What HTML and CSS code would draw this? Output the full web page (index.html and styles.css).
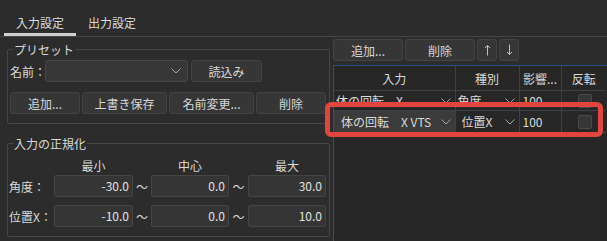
FILE: index.html
```html
<!DOCTYPE html>
<html lang="ja">
<head>
  <meta charset="UTF-8">
  <title>入力設定</title>
  <link rel="stylesheet" href="styles.css">
</head>
<body>
<div class="tabs">
  <div class="tab active">入力設定</div>
  <div class="tab">出力設定</div>
</div>

<div class="main">
  <div class="left">
    <fieldset class="group preset">
      <legend>プリセット</legend>
      <div class="name-row">
        <span class="label">名前：</span>
        <div class="combo name-combo">
          <span></span>
          <svg class="chevron" width="10" height="6" viewBox="0 0 10 6"><polyline points="0.5,0.5 5,5 9.5,0.5"/></svg>
        </div>
        <button class="btn load">読込み</button>
      </div>
      <div class="preset-buttons">
        <button class="btn">追加...</button>
        <button class="btn">上書き保存</button>
        <button class="btn">名前変更...</button>
        <button class="btn">削除</button>
      </div>
    </fieldset>

    <fieldset class="group normalize">
      <legend>入力の正規化</legend>
      <div class="norm-row head">
        <span></span><span>最小</span><span></span><span>中心</span><span></span><span>最大</span>
      </div>
      <div class="norm-row">
        <span class="label">角度：</span>
        <div class="num">-30.0</div>
        <span class="tilde">〜</span>
        <div class="num">0.0</div>
        <span class="tilde">〜</span>
        <div class="num">30.0</div>
      </div>
      <div class="norm-row second">
        <span class="label">位置X：</span>
        <div class="num">-10.0</div>
        <span class="tilde">〜</span>
        <div class="num">0.0</div>
        <span class="tilde">〜</span>
        <div class="num">10.0</div>
      </div>
    </fieldset>
  </div>

  <div class="right">
    <div class="toolbar">
      <button class="btn wide">追加...</button>
      <button class="btn wide">削除</button>
      <button class="btn arrow">
        <svg width="7" height="12" viewBox="0 0 7 12"><path d="M3.5 1.5v10M1 4l2.5-2.5L6 4"/></svg>
      </button>
      <button class="btn arrow">
        <svg width="7" height="12" viewBox="0 0 7 12"><path d="M3.5 0.5v10M1 8l2.5 2.5L6 8"/></svg>
      </button>
    </div>

    <div class="table-wrap">
      <table class="bindings">
        <colgroup>
          <col class="c-input"><col class="c-kind"><col class="c-weight"><col class="c-invert">
        </colgroup>
        <thead>
          <tr><th>入力</th><th>種別</th><th>影響...</th><th>反転</th></tr>
        </thead>
        <tbody>
          <tr class="r1">
            <td><div class="cell-combo"><span>体の回転　X</span><svg class="chevron" width="10" height="6" viewBox="0 0 10 6"><polyline points="0.5,0.5 5,5 9.5,0.5"/></svg></div></td>
            <td><div class="cell-combo"><span>角度</span><svg class="chevron" width="10" height="6" viewBox="0 0 10 6"><polyline points="0.5,0.5 5,5 9.5,0.5"/></svg></div></td>
            <td class="weight">100</td>
            <td><div class="check"></div></td>
          </tr>
          <tr class="r2">
            <td><div class="cell-combo active"><span>体の回転　X VTS</span><svg class="chevron" width="10" height="6" viewBox="0 0 10 6"><polyline points="0.5,0.5 5,5 9.5,0.5"/></svg></div></td>
            <td><div class="cell-combo"><span>位置X</span><svg class="chevron" width="10" height="6" viewBox="0 0 10 6"><polyline points="0.5,0.5 5,5 9.5,0.5"/></svg></div></td>
            <td class="weight">100</td>
            <td><div class="check"></div></td>
          </tr>
        </tbody>
      </table>
      <div class="highlight"></div>
    </div>
  </div>
</div>
</body>
</html>
```

FILE: styles.css
```css
body {
  margin: 0;
  width: 607px;
  height: 241px;
  overflow: hidden;
  background-color: #2c2c2c;
  color: #dadada;
  font-family: "Noto Sans CJK JP", "Noto Sans", sans-serif;
  font-size: 12px;
  line-height: 17px;
}
.tabs {
  display: flex;
  height: 36px;
  padding-left: 4px;
  border-bottom: 1px solid #454545;
}
.tab {
  width: 72px;
  margin-top: 12px;
  height: 21px;
  line-height: 21px;
  text-align: center;
  border-bottom: 3px solid transparent;
}
.tab.active {
  border-bottom-color: #cfcfcf;
}
.main {
  display: flex;
}
.left {
  width: 323px;
  padding-left: 7px;
}
.right {
  flex: 1;
  margin-left: 3px;
  padding-top: 2px;
}
.group {
  margin: 4px 0 0 0;
  padding: 0 3px 9px 2px;
  border: 1px solid #464646;
  border-radius: 2px;
  min-width: 0;
}
.group legend {
  margin-left: 3px;
  padding: 0 1px;
  line-height: 17px;
}
.normalize {
  margin-top: 11px;
}
.label {
  white-space: nowrap;
}
.btn {
  height: 22px;
  padding: 0;
  background-color: #363636;
  border: 1px solid #434343;
  border-radius: 3px;
  color: #d8d8d8;
  font-family: inherit;
  font-size: 12px;
}
.name-row {
  display: flex;
  align-items: center;
  margin-top: 2px;
  height: 22px;
}
.name-row .label {
  width: 35px;
}
.combo {
  display: flex;
  align-items: center;
  justify-content: space-between;
  box-sizing: border-box;
  height: 22px;
  padding: 0 6px;
  background-color: #373737;
  border: 1px solid #474747;
  border-radius: 3px;
}
.name-combo {
  width: 143px;
}
.load {
  width: 71px;
  margin-left: 3px;
}
.chevron {
  fill: none;
  stroke: #a8a8a8;
  stroke-width: 1;
}
.preset-buttons {
  display: grid;
  grid-template-columns: 70px 85px 85px 70px;
  gap: 2px;
  margin-top: 10px;
}
.norm-row {
  display: grid;
  grid-template-columns: 44px 79px 18px 78px 19px 78px;
  align-items: center;
  height: 22px;
}
.norm-row.head {
  margin-top: 5px;
  height: 18px;
  line-height: 18px;
  text-align: center;
}
.norm-row.second {
  margin-top: 8px;
}
.norm-row .label {
  margin-left: -1px;
}
.num {
  box-sizing: border-box;
  height: 22px;
  line-height: 20px;
  padding-right: 3px;
  text-align: right;
  background-color: #353535;
  border: 1px solid #454545;
  border-radius: 2px;
  color: #e2e2e2;
}
.tilde {
  text-align: center;
}
.toolbar {
  display: flex;
  gap: 2px;
}
.btn.wide {
  width: 70px;
}
.btn.arrow {
  width: 20px;
  display: flex;
  align-items: center;
  justify-content: center;
}
.btn.arrow svg {
  fill: none;
  stroke: #c0c0c0;
  stroke-width: 1;
}
.table-wrap {
  position: relative;
  margin-top: 4px;
  width: 280px;
  height: 178px;
  border: 1px solid #2b4f84;
  background-color: #272727;
}
.bindings {
  border-collapse: collapse;
  table-layout: fixed;
  width: 272px;
}
.c-input { width: 121px; }
.c-kind { width: 64px; }
.c-weight { width: 42px; }
.c-invert { width: 45px; }
.bindings th {
  height: 24px;
  padding: 0;
  font-weight: normal;
  text-align: center;
  border-right: 1px solid #404040;
  border-bottom: 1px solid #404040;
}
.bindings td {
  padding: 0;
  border-right: 1px solid #404040;
  border-bottom: 1px solid #404040;
  white-space: nowrap;
  overflow: hidden;
}
.bindings th:last-child,
.bindings td:last-child {
  border-right: none;
}
.r1 td {
  height: 19px;
}
.r2 td {
  height: 21px;
}
.cell-combo {
  display: flex;
  align-items: center;
  justify-content: space-between;
  height: 100%;
  padding: 0 4px 0 2px;
}
.cell-combo.active {
  background-color: #3b3b3b;
  padding-left: 7px;
}
.r2 .cell-combo {
  padding-left: 6px;
}
.r2 .cell-combo.active {
  padding-left: 7px;
}
.weight {
  padding-left: 3px !important;
}
.check {
  box-sizing: border-box;
  width: 14px;
  height: 14px;
  margin-left: 16px;
  background-color: #363636;
  border: 1px solid #4a4a4a;
  border-radius: 2px;
}
.highlight {
  position: absolute;
  left: -9px;
  top: 36px;
  width: 268px;
  height: 25px;
  border: 5px solid #e2443e;
  border-radius: 6px;
}
```
